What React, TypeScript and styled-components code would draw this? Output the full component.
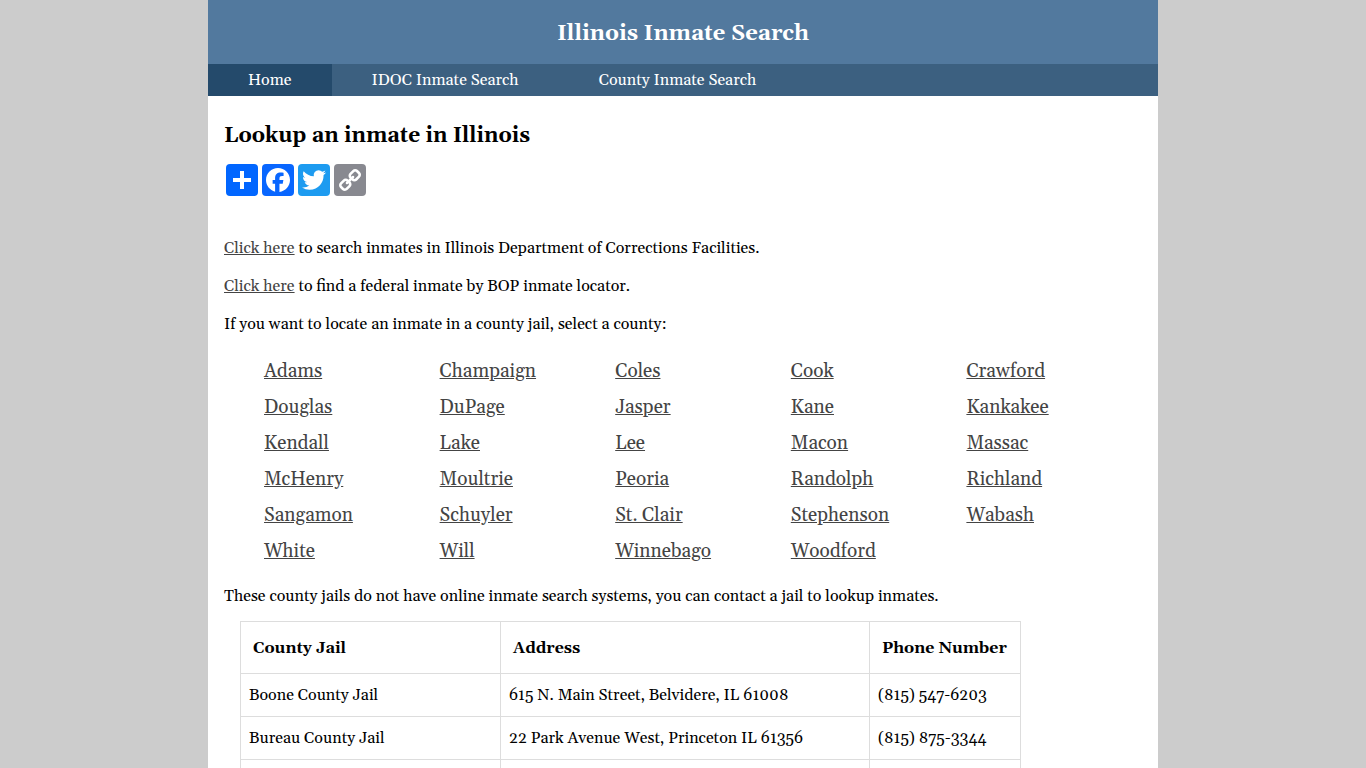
import React from "react";
import styled, { createGlobalStyle } from "styled-components";

const GlobalStyle = createGlobalStyle`
  body {
    margin: 0;
    background: #cccccc;
    color: #000;
    font-family: Georgia, Gelasio, "Liberation Serif", serif;
    font-size: 16px;
    line-height: 22px;
  }
`;

const Page = styled.div`
  max-width: 950px;
  min-height: 100vh;
  margin: 0 auto;
  background: #fff;
`;

const Banner = styled.header`
  padding: 18px 16px 14px;
  background: #52799e;
  color: #fff;
  text-align: center;
`;

const SiteTitle = styled.h1`
  margin: 0;
  font-size: 22px;
  line-height: 32px;
`;

const Nav = styled.nav`
  display: flex;
  flex-wrap: wrap;
  background: #3c6080;
`;

const NavLink = styled.a<{ $active?: boolean }>`
  padding: 4px 40px;
  line-height: 24px;
  color: #fff;
  text-decoration: none;
  background: ${(p) => (p.$active ? "#244a6b" : "transparent")};
`;

const Main = styled.main`
  padding: 24px 16px 16px;
`;

const Heading = styled.h2`
  margin: 0 0 12px;
  font-size: 21px;
  line-height: 32px;
`;

const ShareBar = styled.div`
  display: flex;
  gap: 4px;
  padding: 0 2px;
  margin-bottom: 41px;
`;

const ShareButton = styled.button<{ $color: string }>`
  width: 32px;
  height: 32px;
  padding: 0;
  border: 0;
  border-radius: 4px;
  background: ${(p) => p.$color};
  cursor: pointer;

  svg {
    display: block;
    width: 100%;
    height: 100%;
  }
`;

const Paragraph = styled.p<{ $compact?: boolean }>`
  margin: 0 0 ${(p) => (p.$compact ? 14 : 16)}px;
`;

const TextLink = styled.a`
  color: #444;
`;

const CountyList = styled.ul`
  display: grid;
  grid-template-columns: repeat(5, 1fr);
  margin: 0 0 16px;
  padding: 2px 0 0 40px;
  list-style: none;
  font-size: 19px;
  line-height: 36px;
`;

const JailTable = styled.table`
  width: calc(100% - 137px);
  margin: 0 16px;
  border-collapse: collapse;
  table-layout: fixed;
`;

const HeadCell = styled.th<{ $width?: string }>`
  width: ${(p) => p.$width ?? "auto"};
  box-sizing: border-box;
  height: 52px;
  padding: 0 12px;
  border: 1px solid #ddd;
  text-align: left;
  white-space: nowrap;
`;

const Cell = styled.td`
  box-sizing: border-box;
  height: 43px;
  padding: 0 8px;
  border: 1px solid #ddd;
`;

const counties = [
  "Adams", "Champaign", "Coles", "Cook", "Crawford",
  "Douglas", "DuPage", "Jasper", "Kane", "Kankakee",
  "Kendall", "Lake", "Lee", "Macon", "Massac",
  "McHenry", "Moultrie", "Peoria", "Randolph", "Richland",
  "Sangamon", "Schuyler", "St. Clair", "Stephenson", "Wabash",
  "White", "Will", "Winnebago", "Woodford",
];

const jails = [
  ["Boone County Jail", "615 N. Main Street, Belvidere, IL 61008", "(815) 547-6203"],
  ["Bureau County Jail", "22 Park Avenue West, Princeton IL 61356", "(815) 875-3344"],
  ["", "", ""],
];

const shares = [
  {
    label: "Share",
    color: "#0166ff",
    icon: <path fill="#fff" d="M14 7h4v18h-4z M7 14h18v4H7z" />,
  },
  {
    label: "Facebook",
    color: "#0866ff",
    icon: (
      <path
        fill="#fff"
        d="M28 16c0-6.627-5.373-12-12-12S4 9.373 4 16c0 5.628 3.875 10.35 9.101 11.647v-7.98h-2.474V16H13.1v-1.58c0-4.085 1.849-5.978 5.859-5.978.76 0 2.072.15 2.608.298v3.325c-.283-.03-.775-.045-1.386-.045-1.967 0-2.728.745-2.728 2.683V16h3.92l-.673 3.667h-3.247v8.245C23.395 27.195 28 22.135 28 16"
      />
    ),
  },
  {
    label: "Twitter",
    color: "#1d9bf0",
    icon: (
      <path
        fill="#fff"
        d="M28 8.557a10 10 0 0 1-2.828.775 4.93 4.93 0 0 0 2.166-2.725 9.7 9.7 0 0 1-3.13 1.194 4.92 4.92 0 0 0-3.593-1.55 4.924 4.924 0 0 0-4.794 6.049c-4.09-.21-7.72-2.17-10.15-5.15a4.94 4.94 0 0 0-.665 2.477c0 1.71.87 3.214 2.19 4.1a5 5 0 0 1-2.23-.616v.06c0 2.39 1.7 4.38 3.952 4.83-.414.115-.85.174-1.297.174q-.476-.001-.928-.086a4.935 4.935 0 0 0 4.6 3.42 9.9 9.9 0 0 1-6.114 2.107q-.597 0-1.175-.068a13.95 13.95 0 0 0 7.55 2.213c9.056 0 14.01-7.507 14.01-14.013q0-.32-.015-.637c.96-.695 1.795-1.56 2.455-2.55z"
      />
    ),
  },
  {
    label: "Copy Link",
    color: "#888990",
    icon: (
      <path
        fill="#fff"
        d="M7.591 21.177q0-.54.377-.917l2.804-2.804a1.24 1.24 0 0 1 .913-.378q.565 0 .97.43-.038.041-.255.25-.215.21-.29.29a3 3 0 0 0-.2.256 1.1 1.1 0 0 0-.177.344 1.4 1.4 0 0 0-.046.37q0 .54.377.918a1.25 1.25 0 0 0 .918.377q.192.001.373-.047.19-.051.343-.175.136-.1.256-.2.106-.097.29-.29l.25-.254c.285.273.433.598.433.969q0 .54-.378.918l-2.782 2.795a1.25 1.25 0 0 1-.918.364q-.54 0-.917-.35l-1.982-1.97a1.22 1.22 0 0 1-.378-.9zm9.477-9.504q0-.54.377-.917l2.777-2.796a1.24 1.24 0 0 1 .913-.377q.525 0 .917.364l1.984 1.968q.38.378.38.903 0 .54-.38.917l-2.802 2.804a1.24 1.24 0 0 1-.916.364q-.566 0-.971-.418.039-.04.256-.25a8 8 0 0 0 .29-.29c.072-.08.139-.166.2-.255q.121-.153.176-.344.048-.18.047-.37 0-.54-.378-.918a1.25 1.25 0 0 0-.918-.377q-.19-.001-.37.046-.19.055-.346.176a4 4 0 0 0-.256.2q-.08.074-.29.29l-.25.258a1.29 1.29 0 0 1-.44-.978zM5.028 21.177c0 1.08.384 1.99 1.146 2.738l1.982 1.97q1.122 1.12 2.738 1.12 1.635 0 2.75-1.147l2.777-2.794c.75-.747 1.12-1.66 1.12-2.737 0-1.106-.392-2.045-1.183-2.818l1.186-1.185c.774.79 1.708 1.186 2.805 1.186q1.617 0 2.75-1.13l2.803-2.81c.751-.754 1.128-1.671 1.128-2.748 0-1.08-.382-1.993-1.146-2.738L23.878 6.12Q22.758 5 21.139 5q-1.635 0-2.75 1.146l-2.777 2.795c-.75.747-1.12 1.66-1.12 2.737 0 1.105.392 2.045 1.183 2.817l-1.186 1.186c-.774-.79-1.708-1.186-2.805-1.186q-1.617 0-2.75 1.132L6.13 18.426Q5 19.559 5 21.177z"
      />
    ),
  },
];

export default function App() {
  return (
    <>
      <GlobalStyle />
      <Page>
        <Banner>
          <SiteTitle>Illinois Inmate Search</SiteTitle>
        </Banner>
        <Nav>
          <NavLink href="#home" $active>Home</NavLink>
          <NavLink href="#idoc">IDOC Inmate Search</NavLink>
          <NavLink href="#county">County Inmate Search</NavLink>
        </Nav>
        <Main>
          <Heading>Lookup an inmate in Illinois</Heading>
          <ShareBar>
            {shares.map((s) => (
              <ShareButton key={s.label} type="button" aria-label={s.label} $color={s.color}>
                <svg viewBox="0 0 32 32" aria-hidden="true">{s.icon}</svg>
              </ShareButton>
            ))}
          </ShareBar>
          <Paragraph>
            <TextLink href="#idoc">Click here</TextLink> to search inmates in Illinois Department of Corrections Facilities.
          </Paragraph>
          <Paragraph>
            <TextLink href="#bop">Click here</TextLink> to find a federal inmate by BOP inmate locator.
          </Paragraph>
          <Paragraph>If you want to locate an inmate in a county jail, select a county:</Paragraph>
          <CountyList>
            {counties.map((name) => (
              <li key={name}>
                <TextLink href={`#${name}`}>{name}</TextLink>
              </li>
            ))}
          </CountyList>
          <Paragraph $compact>
            These county jails do not have online inmate search systems, you can contact a jail to lookup inmates.
          </Paragraph>
          <JailTable>
            <thead>
              <tr>
                <HeadCell $width="260px">County Jail</HeadCell>
                <HeadCell>Address</HeadCell>
                <HeadCell $width="151px">Phone Number</HeadCell>
              </tr>
            </thead>
            <tbody>
              {jails.map((row, i) => (
                <tr key={i}>
                  {row.map((text, j) => (
                    <Cell key={j}>{text}</Cell>
                  ))}
                </tr>
              ))}
            </tbody>
          </JailTable>
        </Main>
      </Page>
    </>
  );
}
